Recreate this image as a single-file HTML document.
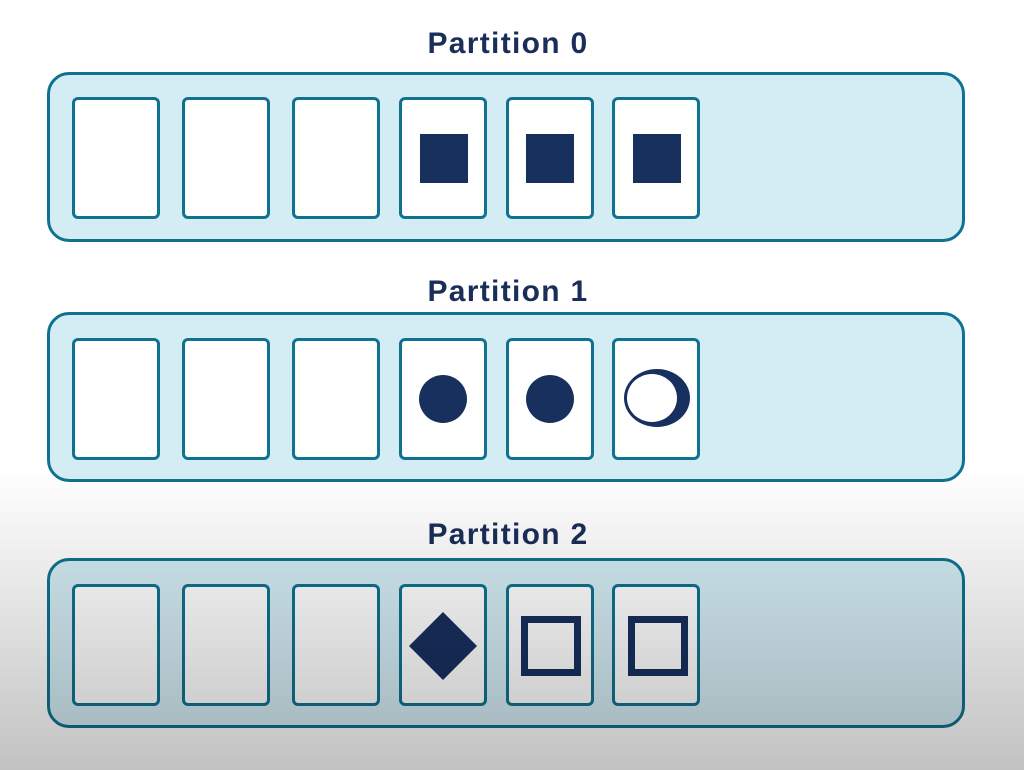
<!DOCTYPE html>
<html><head><style>
body{margin:0;width:1024px;height:770px;background:#fff;position:relative;overflow:hidden;font-family:"Liberation Sans",sans-serif}
.lbl{position:absolute;left:0;width:1016px;text-align:center;font-weight:bold;font-size:30px;letter-spacing:1.3px;color:#1a2e5a}
.box{position:absolute;left:47px;height:170px;background:#d4ecf4;border:3px solid #107290;border-radius:22px;box-sizing:border-box;width:918px}
.card{position:absolute;width:88px;height:122px;background:#fff;border:3px solid #107290;border-radius:6px;box-sizing:border-box}
.ov{position:absolute;left:0;top:470px;width:1024px;height:300px;background:linear-gradient(rgba(0,0,0,0),rgba(0,0,0,0.24));pointer-events:none}
</style></head><body>
<div class="lbl" style="top:27px">Partition 0</div>
<div class="lbl" style="top:275px">Partition 1</div>
<div class="lbl" style="top:518px">Partition 2</div>
<div class="box" style="top:72px"></div>
<div class="box" style="top:312px"></div>
<div class="box" style="top:558px"></div>
<div class="card" style="left:72px;top:97px"></div><div class="card" style="left:182px;top:97px"></div><div class="card" style="left:292px;top:97px"></div><div class="card" style="left:399px;top:97px"></div><div class="card" style="left:506px;top:97px"></div><div class="card" style="left:612px;top:97px"></div>
<div class="card" style="left:72px;top:338px"></div><div class="card" style="left:182px;top:338px"></div><div class="card" style="left:292px;top:338px"></div><div class="card" style="left:399px;top:338px"></div><div class="card" style="left:506px;top:338px"></div><div class="card" style="left:612px;top:338px"></div>
<div class="card" style="left:72px;top:584px"></div><div class="card" style="left:182px;top:584px"></div><div class="card" style="left:292px;top:584px"></div><div class="card" style="left:399px;top:584px"></div><div class="card" style="left:506px;top:584px"></div><div class="card" style="left:612px;top:584px"></div>
<svg width="1024" height="770" style="position:absolute;left:0;top:0">
<g fill="#17305e">
<rect x="420" y="134" width="48" height="49"/>
<rect x="526" y="134" width="48" height="49"/>
<rect x="633" y="134" width="48" height="49"/>
<circle cx="443" cy="399" r="24"/>
<circle cx="550" cy="399" r="24"/>
<ellipse cx="657" cy="398" rx="33" ry="29"/>
<polygon points="443,612 477,646 443,680 409,646"/>
</g>
<ellipse cx="652" cy="398" rx="25" ry="24" fill="#fff"/>
<rect x="524.5" y="619.5" width="53" height="53" fill="none" stroke="#17305e" stroke-width="7"/>
<rect x="631.5" y="619.5" width="53" height="53" fill="none" stroke="#17305e" stroke-width="7"/>
</svg>
<div class="ov"></div>
</body></html>
